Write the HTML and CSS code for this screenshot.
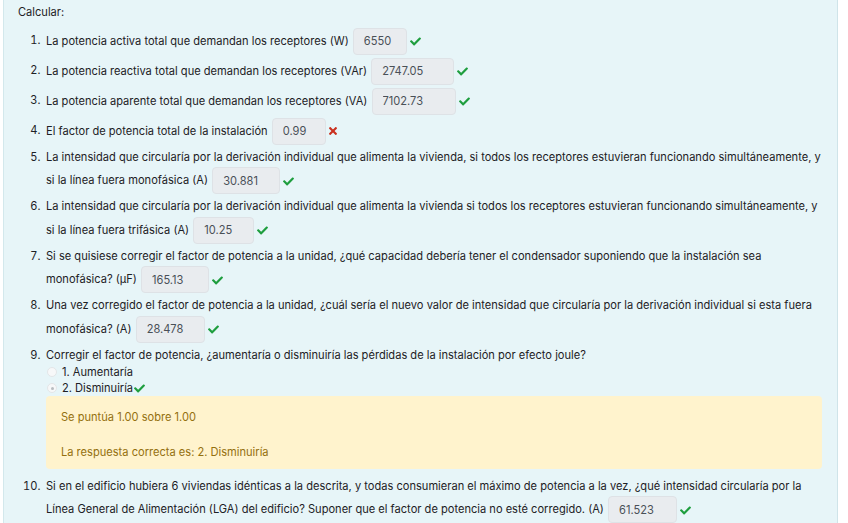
FILE: index.html
```html
<!DOCTYPE html>
<html>
 <head>
  <title>Calcular</title>
  <link rel="stylesheet" href="styles.css">
 </head>
 <body>

 <div class="formulation">
  <p class="intro">Calcular:</p>

  <ol class="parts">
    <li>La potencia activa total que demandan los receptores (W) <span class="answer"><input class="w54" type="text" readonly value="6550"><svg class="mark ok" viewBox="0 0 512 512"><path d="M173.9 439.4l-166.4-166.4c-10-10-10-26.2 0-36.2l36.2-36.2c10-10 26.2-10 36.2 0L192 312.7 432.1 72.6c10-10 26.2-10 36.2 0l36.2 36.2c10 10 10 26.2 0 36.2l-294.4 294.4c-10 10-26.2 10-36.2 0z"/></svg></span></li>

    <li>La potencia reactiva total que demandan los receptores (VAr) <span class="answer"><input class="w83" type="text" readonly value="2747.05"><svg class="mark ok" viewBox="0 0 512 512"><path d="M173.9 439.4l-166.4-166.4c-10-10-10-26.2 0-36.2l36.2-36.2c10-10 26.2-10 36.2 0L192 312.7 432.1 72.6c10-10 26.2-10 36.2 0l36.2 36.2c10 10 10 26.2 0 36.2l-294.4 294.4c-10 10-26.2 10-36.2 0z"/></svg></span></li>

    <li>La potencia aparente total que demandan los receptores (VA) <span class="answer"><input class="w84" type="text" readonly value="7102.73"><svg class="mark ok" viewBox="0 0 512 512"><path d="M173.9 439.4l-166.4-166.4c-10-10-10-26.2 0-36.2l36.2-36.2c10-10 26.2-10 36.2 0L192 312.7 432.1 72.6c10-10 26.2-10 36.2 0l36.2 36.2c10 10 10 26.2 0 36.2l-294.4 294.4c-10 10-26.2 10-36.2 0z"/></svg></span></li>

    <li>El factor de potencia total de la instalación <span class="answer"><input class="w54" type="text" readonly value="0.99"><svg class="mark bad" viewBox="0 0 352 512"><path d="M242.7 256l100.1-100.1c12.3-12.3 12.3-32.2 0-44.5l-22.2-22.2c-12.3-12.3-32.2-12.3-44.5 0L176 189.3 75.9 89.2c-12.3-12.3-32.2-12.3-44.5 0L9.2 111.5c-12.3 12.3-12.3 32.2 0 44.5L109.3 256 9.2 356.1c-12.3 12.3-12.3 32.2 0 44.5l22.2 22.2c12.3 12.3 32.2 12.3 44.5 0L176 322.7l100.1 100.1c12.3 12.3 32.2 12.3 44.5 0l22.2-22.2c12.3-12.3 12.3-32.2 0-44.5L242.7 256z"/></svg></span></li>

    <li>La intensidad que circularía por la derivación individual que alimenta la vivienda, si todos los receptores estuvieran funcionando simultáneamente, y si la línea fuera monofásica (A) <span class="answer"><input class="w68" type="text" readonly value="30.881"><svg class="mark ok" viewBox="0 0 512 512"><path d="M173.9 439.4l-166.4-166.4c-10-10-10-26.2 0-36.2l36.2-36.2c10-10 26.2-10 36.2 0L192 312.7 432.1 72.6c10-10 26.2-10 36.2 0l36.2 36.2c10 10 10 26.2 0 36.2l-294.4 294.4c-10 10-26.2 10-36.2 0z"/></svg></span></li>

    <li>La intensidad que circularía por la derivación individual que alimenta la vivienda si todos los receptores estuvieran funcionando simultáneamente, y si la línea fuera trifásica (A) <span class="answer"><input class="w61" type="text" readonly value="10.25"><svg class="mark ok" viewBox="0 0 512 512"><path d="M173.9 439.4l-166.4-166.4c-10-10-10-26.2 0-36.2l36.2-36.2c10-10 26.2-10 36.2 0L192 312.7 432.1 72.6c10-10 26.2-10 36.2 0l36.2 36.2c10 10 10 26.2 0 36.2l-294.4 294.4c-10 10-26.2 10-36.2 0z"/></svg></span></li>

    <li>Si se quisiese corregir el factor de potencia a la unidad, ¿qué capacidad debería tener el condensador suponiendo que la instalación sea monofásica? (µF) <span class="answer"><input class="w68" type="text" readonly value="165.13"><svg class="mark ok" viewBox="0 0 512 512"><path d="M173.9 439.4l-166.4-166.4c-10-10-10-26.2 0-36.2l36.2-36.2c10-10 26.2-10 36.2 0L192 312.7 432.1 72.6c10-10 26.2-10 36.2 0l36.2 36.2c10 10 10 26.2 0 36.2l-294.4 294.4c-10 10-26.2 10-36.2 0z"/></svg></span></li>

    <li>Una vez corregido el factor de potencia a la unidad, ¿cuál sería el nuevo valor de intensidad que circularía por la derivación individual si esta fuera monofásica? (A) <span class="answer"><input class="w69" type="text" readonly value="28.478"><svg class="mark ok" viewBox="0 0 512 512"><path d="M173.9 439.4l-166.4-166.4c-10-10-10-26.2 0-36.2l36.2-36.2c10-10 26.2-10 36.2 0L192 312.7 432.1 72.6c10-10 26.2-10 36.2 0l36.2 36.2c10 10 10 26.2 0 36.2l-294.4 294.4c-10 10-26.2 10-36.2 0z"/></svg></span></li>

    <li class="choice">Corregir el factor de potencia, ¿aumentaría o disminuiría las pérdidas de la instalación por efecto joule?
      <div class="options">
        <label class="opt"><span class="radio"></span>1. Aumentaría</label>
        <label class="opt"><span class="radio checked"></span>2. Disminuiría<svg class="mark ok tight" viewBox="0 0 512 512"><path d="M173.9 439.4l-166.4-166.4c-10-10-10-26.2 0-36.2l36.2-36.2c10-10 26.2-10 36.2 0L192 312.7 432.1 72.6c10-10 26.2-10 36.2 0l36.2 36.2c10 10 10 26.2 0 36.2l-294.4 294.4c-10 10-26.2 10-36.2 0z"/></svg></label>
      </div>
      <div class="outcome">
        <p>Se puntúa 1.00 sobre 1.00</p>
        <p>La respuesta correcta es: 2. Disminuiría</p>
      </div>
    </li>

    <li>Si en el edificio hubiera 6 viviendas idénticas a la descrita, y todas consumieran el máximo de potencia a la vez, ¿qué intensidad circularía por la Línea General de Alimentación (LGA) del edificio? Suponer que el factor de potencia no esté corregido. (A) <span class="answer"><input class="w69" type="text" readonly value="61.523"><svg class="mark ok" viewBox="0 0 512 512"><path d="M173.9 439.4l-166.4-166.4c-10-10-10-26.2 0-36.2l36.2-36.2c10-10 26.2-10 36.2 0L192 312.7 432.1 72.6c10-10 26.2-10 36.2 0l36.2 36.2c10 10 10 26.2 0 36.2l-294.4 294.4c-10 10-26.2 10-36.2 0z"/></svg></span></li>
  </ol>
 </div>

</body>
</html>
```

FILE: styles.css
```css
body {
  margin: 0;
  background: #fff;
  color: #1d2125;
  font-family: Inter, "Liberation Sans", sans-serif;
  font-size: 11.1px;
  line-height: 19.5px;
}
.formulation {
  width: 835px;
  min-height: 523px;
  box-sizing: border-box;
  margin-left: 3px;
  padding: 3px 15px 0 14px;
  background: #e7f5f8;
  border-left: 1px solid #d3e8ec;
  border-right: 1px solid #cfe4e9;
}
.intro {
  margin: 0 0 5px 0;
}
.parts {
  margin: 0;
  padding-left: 28px;
}
.parts li {
  margin-bottom: 3px;
}
.parts li::marker {
  content: counter(list-item) ".\2002";
}
.answer {
  white-space: nowrap;
}
.answer input {
  font: inherit;
  color: #495057;
  background: #e9ecef;
  border: 1px solid #dee2e6;
  border-radius: 4px;
  height: 27px;
  box-sizing: border-box;
  padding: 0 10px;
  vertical-align: middle;
  margin-left: 1px;
}
.w54 { width: 54px; }
.w61 { width: 61px; }
.w68 { width: 68px; }
.w69 { width: 69px; }
.w83 { width: 83px; }
.w84 { width: 84px; }
.mark {
  width: 11px;
  height: 11px;
  margin-left: 3px;
  vertical-align: -3px;
}
.mark.ok { fill: #1e9e3e; }
.mark.bad { fill: #ca3120; width: 8px; height: 12px; margin-left: 3px; }
.mark.tight { margin-left: 1px; }
.options {
  margin-top: -1px;
  padding-left: 1px;
  line-height: 16px;
}
.opt {
  display: flex;
  align-items: center;
}
.radio {
  width: 8px;
  height: 8px;
  border-radius: 50%;
  border: 1px solid #e3e6e8;
  background: #f7f8f9;
  margin-right: 5px;
  display: inline-flex;
  align-items: center;
  justify-content: center;
}
.radio.checked::after {
  content: "";
  width: 3px;
  height: 3px;
  border-radius: 50%;
  background: #b8bcc0;
}
.outcome {
  background: #fff3cd;
  color: #94700f;
  border-radius: 4px;
  padding: 12px 15px 6px 15px;
  margin-bottom: 8px;
}
.outcome p {
  margin: 0;
}
.outcome p + p {
  margin-top: 15.5px;
}
```
